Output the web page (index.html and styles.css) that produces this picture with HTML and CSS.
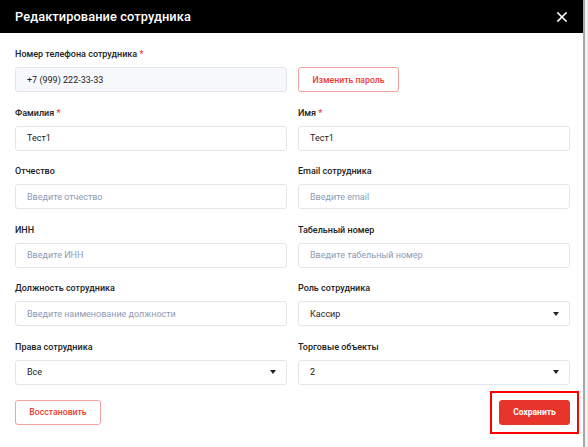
FILE: index.html
```html
<!DOCTYPE html>
<html lang="ru">
<head>
<meta charset="utf-8">
<title>Редактирование сотрудника</title>
<link rel="stylesheet" href="styles.css">
</head>
<body>
<div class="modal">
  <header class="modal-head">
    <h1 class="modal-title">Редактирование сотрудника</h1>
    <button class="close" aria-label="Закрыть">
      <svg width="10" height="10" viewBox="0 0 10 10"><path d="M1 1L9 9M9 1L1 9" stroke="#fff" stroke-width="1.6" stroke-linecap="square"/></svg>
    </button>
  </header>
  <div class="modal-body">
    <div class="grid">
      <div class="field">
        <label class="label">Номер телефона сотрудника <span class="req">*</span></label>
        <div class="input input-disabled">+7 (999) 222-33-33</div>
      </div>
      <div class="field">
        <span class="label">&nbsp;</span>
        <div><button class="btn btn-outline btn-pass">Изменить пароль</button></div>
      </div>

      <div class="field">
        <label class="label">Фамилия <span class="req">*</span></label>
        <div class="input">Тест1</div>
      </div>
      <div class="field">
        <label class="label">Имя <span class="req">*</span></label>
        <div class="input">Тест1</div>
      </div>

      <div class="field">
        <label class="label">Отчество</label>
        <div class="input placeholder">Введите отчество</div>
      </div>
      <div class="field">
        <label class="label">Email сотрудника</label>
        <div class="input placeholder">Введите email</div>
      </div>

      <div class="field">
        <label class="label">ИНН</label>
        <div class="input placeholder">Введите ИНН</div>
      </div>
      <div class="field">
        <label class="label">Табельный номер</label>
        <div class="input placeholder">Введите табельный номер</div>
      </div>

      <div class="field">
        <label class="label">Должность сотрудника</label>
        <div class="input placeholder">Введите наименование должности</div>
      </div>
      <div class="field">
        <label class="label">Роль сотрудника</label>
        <div class="input select">Кассир<span class="caret"></span></div>
      </div>

      <div class="field">
        <label class="label">Права сотрудника</label>
        <div class="input select">Все<span class="caret"></span></div>
      </div>
      <div class="field">
        <label class="label">Торговые объекты</label>
        <div class="input select">2<span class="caret"></span></div>
      </div>
    </div>
    <div class="actions">
      <button class="btn btn-outline btn-restore">Восстановить</button>
      <span class="highlight"><button class="btn btn-primary btn-save">Сохранить</button></span>
    </div>
  </div>
</div>
</body>
</html>
```

FILE: styles.css
```css
* { box-sizing: border-box; }
html, body { margin: 0; padding: 0; }
body {
  background: #f0f0f0;
  font-family: Roboto, "Noto Sans", Arial, sans-serif;
  color: #222;
  height: 447px;
  overflow: hidden;
}
.modal {
  width: 585px;
  height: 447px;
  background: #fff;
  border-right: 2px solid #a8a8a8;
}
.modal-head {
  height: 33px;
  background: #000;
  display: flex;
  align-items: center;
  justify-content: space-between;
  padding: 0 16px 0 15px;
}
.modal-title {
  margin: 0;
  color: #fff;
  font-size: 12.8px;
  font-weight: 500;
  letter-spacing: 0.1px;
}
.close {
  background: none;
  border: 0;
  padding: 0;
  display: flex;
  cursor: pointer;
}
.modal-body {
  padding: 14px 13px 0 15px;
}
.grid {
  display: grid;
  grid-template-columns: 272px 272px;
  column-gap: 11px;
  row-gap: 13.6px;
}
.field {
  display: flex;
  flex-direction: column;
  gap: 6px;
}
.label {
  font-size: 9px;
  line-height: 14px;
  font-weight: 500;
  color: #222;
}
.req { color: #e53935; }
.input {
  height: 25px;
  border: 1px solid #e2e5ea;
  border-radius: 3px;
  padding: 0 11px;
  display: flex;
  align-items: center;
  font-size: 9px;
  color: #222;
  background: #fff;
}
.input-disabled { background: #f6f8fb; }
.placeholder { color: #8c9bb5; }
.select { justify-content: space-between; padding-right: 10px; }
.caret {
  width: 0;
  height: 0;
  border-left: 3.5px solid transparent;
  border-right: 3.5px solid transparent;
  border-top: 4px solid #222;
}
.btn {
  font-family: inherit;
  font-size: 8.7px;
  font-weight: 500;
  height: 25px;
  border-radius: 3px;
  cursor: pointer;
  padding: 0;
}
.btn-outline {
  background: #fff;
  border: 1px solid #f3a19c;
  color: #ee3b32;
}
.btn-pass { width: 101px; }
.btn-restore { width: 86px; }
.btn-primary {
  background: #e8352b;
  border: 1px solid #e8352b;
  color: #fff;
  font-weight: 700;
  font-size: 8.5px;
}
.btn-save {
  width: 71px;
  display: block;
}
.highlight {
  display: block;
  border: 2px solid #ff0000;
  padding: 7px;
  margin: -9px -9px -9px 0;
}
.actions {
  display: flex;
  justify-content: space-between;
  align-items: center;
  padding-top: 15px;
}
```
